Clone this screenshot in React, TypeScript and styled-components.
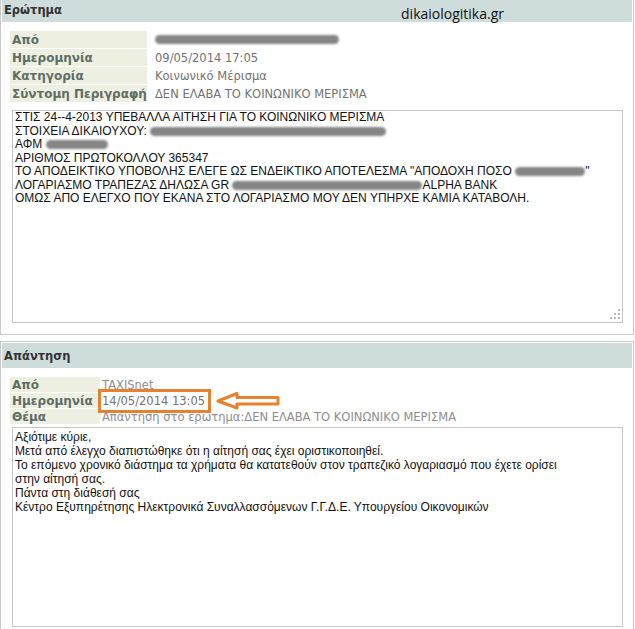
import styled, { createGlobalStyle } from 'styled-components';

const GlobalStyle = createGlobalStyle`
  body {
    margin: 0;
    background: #fff;
    overflow: hidden;
  }
`;

const Page = styled.div`
  width: 635px;
  display: flex;
  flex-direction: column;
  gap: 6px;
  font-family: 'DejaVu Sans', Verdana, sans-serif;
`;

const Panel = styled.section<{ $cropTop?: boolean }>`
  width: 634px;
  box-sizing: border-box;
  border: 1px solid #c9c9c9;
  padding: 1px;
  margin-top: ${(p) => (p.$cropTop ? '-5px' : '0')};
`;

const PanelHeader = styled.header`
  height: 25px;
  background: #cfdcdc;
  display: flex;
  align-items: center;
  padding: 1px 2px 0;
  box-sizing: border-box;
  font-size: 11.5px;
  font-weight: bold;
  color: #333;
`;

const Watermark = styled.span`
  margin-left: auto;
  margin-right: 126px;
  align-self: flex-end;
  margin-bottom: -1px;
  font-family: 'Open Sans', sans-serif;
  font-size: 14px;
  font-weight: normal;
  color: #111;
`;

const PanelBody = styled.div<{ $bottom: number }>`
  padding: 9px 9px ${(p) => p.$bottom}px 8px;
`;

const InfoGrid = styled.div<{ $label: number; $row: number }>`
  display: grid;
  grid-template-columns: ${(p) => p.$label}px 1fr;
  grid-auto-rows: ${(p) => p.$row}px;
  row-gap: 1px;
`;

const Label = styled.div`
  background: #edf0e0;
  color: #5e6d66;
  font-size: 12px;
  font-weight: bold;
  display: flex;
  align-items: center;
  padding-left: 2px;
  white-space: nowrap;
`;

const Value = styled.div<{ $pad: number; $light?: boolean }>`
  position: relative;
  display: flex;
  align-items: center;
  padding-left: ${(p) => p.$pad}px;
  font-size: 11.5px;
  color: ${(p) => (p.$light ? '#8e8e8e' : '#727272')};
  white-space: nowrap;
`;

const TextBox = styled.div<{ $h: number; $lh: number; $pt: number }>`
  position: relative;
  margin-left: 2px;
  height: ${(p) => p.$h}px;
  box-sizing: border-box;
  border: 1px solid #c6c6c6;
  padding: ${(p) => p.$pt}px 2px 0;
  font-family: 'Liberation Sans', Arial, sans-serif;
  font-size: 12px;
  line-height: ${(p) => p.$lh}px;
  color: #111;
  white-space: pre;
  overflow: hidden;
`;

const Line = styled.div`
  display: block;
`;

const Redacted = styled.span<{ $w: number }>`
  display: inline-block;
  width: ${(p) => p.$w}px;
  height: 9px;
  background: #858585;
  border-radius: 5px;
  filter: blur(0.8px);
  vertical-align: middle;
`;

const Grip = styled.svg`
  position: absolute;
  right: 1px;
  bottom: 1px;
`;

const Highlight = styled.span`
  position: absolute;
  left: -2px;
  top: -4px;
  width: 113px;
  height: 24px;
  box-sizing: border-box;
  border: 3px solid #e8812f;
`;

const Arrow = styled.svg`
  position: absolute;
  left: 115px;
  top: -2px;
`;

const ResizeGrip = () => (
  <Grip width='14' height='14' viewBox='0 0 14 14'>
    {[
      [11, 2],
      [7, 6],
      [11, 6],
      [3, 10],
      [7, 10],
      [11, 10],
    ].map(([x, y]) => (
      <rect key={`${x}-${y}`} x={x} y={y} width='2' height='2' fill='#b9b9b9' />
    ))}
  </Grip>
);

const App = () => {
  return (
    <>
      <GlobalStyle />
      <Page>
        <Panel $cropTop>
          <PanelHeader>
            Ερώτημα
            <Watermark>dikaiologitika.gr</Watermark>
          </PanelHeader>
          <PanelBody $bottom={10}>
            <InfoGrid $label={137} $row={17}>
              <Label>Από</Label>
              <Value $pad={8}>
                <Redacted $w={184} />
              </Value>
              <Label>Ημερομηνία</Label>
              <Value $pad={8}>09/05/2014 17:05</Value>
              <Label>Κατηγορία</Label>
              <Value $pad={8}>Κοινωνικό Μέρισμα</Value>
              <Label>Σύντομη Περιγραφή</Label>
              <Value $pad={8}>ΔΕΝ ΕΛΑΒΑ ΤΟ ΚΟΙΝΩΝΙΚΟ ΜΕΡΙΣΜΑ</Value>
            </InfoGrid>
            <TextBox $h={213} $lh={13.5} $pt={0} style={{ marginTop: 8 }}>
              <Line>ΣΤΙΣ 24--4-2013 ΥΠΕΒΑΛΛΑ ΑΙΤΗΣΗ ΓΙΑ ΤΟ ΚΟΙΝΩΝΙΚΟ ΜΕΡΙΣΜΑ</Line>
              <Line>
                ΣΤΟΙΧΕΙΑ ΔΙΚΑΙΟΥΧΟΥ: <Redacted $w={236} />
              </Line>
              <Line>
                ΑΦΜ <Redacted $w={62} />
              </Line>
              <Line>ΑΡΙΘΜΟΣ ΠΡΩΤΟΚΟΛΛΟΥ 365347</Line>
              <Line>
                ΤΟ ΑΠΟΔΕΙΚΤΙΚΟ ΥΠΟΒΟΛΗΣ ΕΛΕΓΕ ΩΣ ΕΝΔΕΙΚΤΙΚΟ ΑΠΟΤΕΛΕΣΜΑ "ΑΠΟΔΟΧΗ ΠΟΣΟ{' '}
                <Redacted $w={70} />"
              </Line>
              <Line>
                ΛΟΓΑΡΙΑΣΜΟ ΤΡΑΠΕΖΑΣ ΔΗΛΩΣΑ GR <Redacted $w={190} />
                ALPHA BANK
              </Line>
              <Line>ΟΜΩΣ ΑΠΟ ΕΛΕΓΧΟ ΠΟΥ ΕΚΑΝΑ ΣΤΟ ΛΟΓΑΡΙΑΣΜΟ ΜΟΥ ΔΕΝ ΥΠΗΡΧΕ ΚΑΜΙΑ ΚΑΤΑΒΟΛΗ.</Line>
              <ResizeGrip />
            </TextBox>
          </PanelBody>
        </Panel>

        <Panel>
          <PanelHeader>Απάντηση</PanelHeader>
          <PanelBody $bottom={10}>
            <InfoGrid $label={90} $row={15}>
              <Label>Από</Label>
              <Value $pad={2} $light>
                TAXISnet
              </Value>
              <Label>Ημερομηνία</Label>
              <Value $pad={2}>
                14/05/2014 13:05
                <Highlight />
                <Arrow width='66' height='20' viewBox='0 0 66 20'>
                  <path
                    d='M3 10 L22 2.5 L22 6.5 L63 6.5 L63 13 L22 13 L22 17 Z'
                    fill='none'
                    stroke='#e8812f'
                    strokeWidth='3'
                    strokeLinejoin='round'
                  />
                </Arrow>
              </Value>
              <Label>Θέμα</Label>
              <Value $pad={2} $light>
                Απάντηση στο ερώτημα:ΔΕΝ ΕΛΑΒΑ ΤΟ ΚΟΙΝΩΝΙΚΟ ΜΕΡΙΣΜΑ
              </Value>
            </InfoGrid>
            <TextBox $h={200} $lh={14} $pt={2} style={{ marginTop: 3 }}>
              <Line>Αξιότιμε κύριε,</Line>
              <Line>Μετά από έλεγχο διαπιστώθηκε ότι η αίτησή σας έχει οριστικοποιηθεί.</Line>
              <Line>
                Το επόμενο χρονικό διάστημα τα χρήματα θα κατατεθούν στον τραπεζικό λογαριασμό που έχετε ορίσει
              </Line>
              <Line>στην αίτησή σας.</Line>
              <Line>Πάντα στη διάθεσή σας</Line>
              <Line>Κέντρο Εξυπηρέτησης Ηλεκτρονικά Συναλλασσόμενων Γ.Γ.Δ.Ε. Υπουργείου Οικονομικών</Line>
            </TextBox>
          </PanelBody>
        </Panel>
      </Page>
    </>
  );
};

export default App;
